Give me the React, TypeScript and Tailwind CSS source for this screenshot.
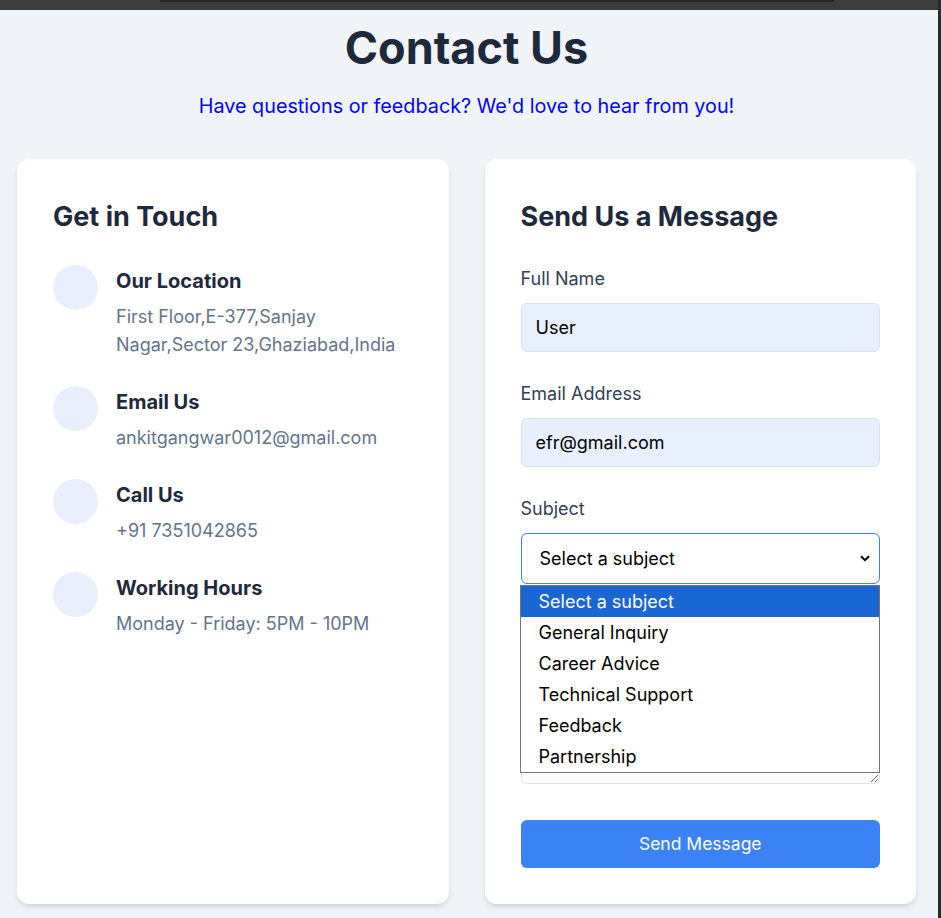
import React from 'react';

const contactItems = [
  { title: 'Our Location', text: 'First Floor,E-377,Sanjay Nagar,Sector 23,Ghaziabad,India' },
  { title: 'Email Us', text: 'ankitgangwar0012@gmail.com' },
  { title: 'Call Us', text: '+91 7351042865' },
  { title: 'Working Hours', text: 'Monday - Friday: 5PM - 10PM' },
];

const subjects = [
  'Select a subject',
  'General Inquiry',
  'Career Advice',
  'Technical Support',
  'Feedback',
  'Partnership',
];

function Field({ label, children }: { label: string; children: React.ReactNode }) {
  return (
    <div className="flex flex-col">
      <label className="text-lg leading-7 text-[#334155]">{label}</label>
      <div className="mt-[10px]">{children}</div>
    </div>
  );
}

export default function App() {
  return (
    <div className="flex h-[918px] w-[941px] overflow-hidden font-['Inter',sans-serif]">
      <div className="flex flex-1 flex-col bg-[#f0f4f8]">
        {/* window chrome strip */}
        <div className="h-[10px] shrink-0 bg-[#3c3c3c]">
          <div className="ml-[160px] mr-[104px] h-[2px] bg-[#262626]"></div>
        </div>

        <div className="w-[933px] px-[17px] pt-[15px]">
          <h1 className="text-center text-[45px] leading-none font-bold text-[#1e293b]">Contact Us</h1>
          <p className="mt-[22px] text-center text-[19.8px] leading-7 text-[#0000ff]">
            Have questions or feedback? We'd love to hear from you!
          </p>

          <div className="mt-[39px] grid grid-cols-2 gap-9">
            {/* Contact info */}
            <div className="h-[745px] rounded-xl bg-white p-9 shadow-md">
              <h2 className="text-[27px] leading-[44px] font-bold text-[#1e293b]">Get in Touch</h2>
              <div className="mt-[26px] flex flex-col gap-[27px]">
                {contactItems.map((item) => (
                  <div key={item.title} className="flex items-start gap-[18px]">
                    <div className="h-[45px] w-[45px] shrink-0 rounded-full bg-[#e9effd]"></div>
                    <div className="pt-[2px]">
                      <h3 className="text-xl leading-7 font-bold text-[#1e293b]">{item.title}</h3>
                      <p className="mt-2 text-lg leading-7 text-[#64748b]">{item.text}</p>
                    </div>
                  </div>
                ))}
              </div>
            </div>

            {/* Message form */}
            <div className="h-[745px] rounded-xl bg-white p-9 shadow-md">
              <h2 className="text-[27px] leading-[44px] font-bold text-[#1e293b]">Send Us a Message</h2>
              <div className="mt-[26px] flex flex-col gap-[28px]">
                <Field label="Full Name">
                  <input
                    readOnly
                    value="User"
                    className="h-[49px] w-full rounded-md border border-[#d9e2ef] bg-[#e8f0fe] px-[14px] text-lg text-black outline-none"
                  />
                </Field>
                <Field label="Email Address">
                  <input
                    readOnly
                    value="efr@gmail.com"
                    className="h-[49px] w-full rounded-md border border-[#d9e2ef] bg-[#e8f0fe] px-[14px] text-lg text-black outline-none"
                  />
                </Field>
                <Field label="Subject">
                  <div className="relative">
                    <div className="flex h-[51px] items-center justify-between rounded-md border border-[#3b82f6] bg-white pr-[9px] pl-[18px] text-lg text-black">
                      <span>Select a subject</span>
                      <svg width="10" height="7" viewBox="0 0 10 7" fill="none">
                        <path d="M1 1.2l4 4 4-4" stroke="#000" strokeWidth="2" />
                      </svg>
                    </div>
                    {/* open option list */}
                    <div className="absolute top-[52px] -left-px z-10 w-[360px] border border-[#767676] bg-white">
                      {subjects.map((s, i) => (
                        <div
                          key={s}
                          className={`flex h-[31px] items-center pl-[18px] text-lg ${
                            i === 0 ? 'bg-[#1a66d2] text-white' : 'text-black'
                          }`}
                        >
                          {s}
                        </div>
                      ))}
                    </div>
                  </div>
                </Field>
                <Field label="Message">
                  <textarea
                    readOnly
                    className="block h-[134px] w-full rounded-md border border-[#d9e2ef] bg-white px-[14px] py-2 text-lg outline-none"
                  ></textarea>
                </Field>
              </div>
              <button className="mt-9 h-12 w-full rounded-md bg-[#3b82f6] text-[17.5px] text-white">Send Message</button>
            </div>
          </div>
        </div>
      </div>
      <div className="w-[3px] shrink-0 bg-[#2b2b2b]"></div>
    </div>
  );
}
